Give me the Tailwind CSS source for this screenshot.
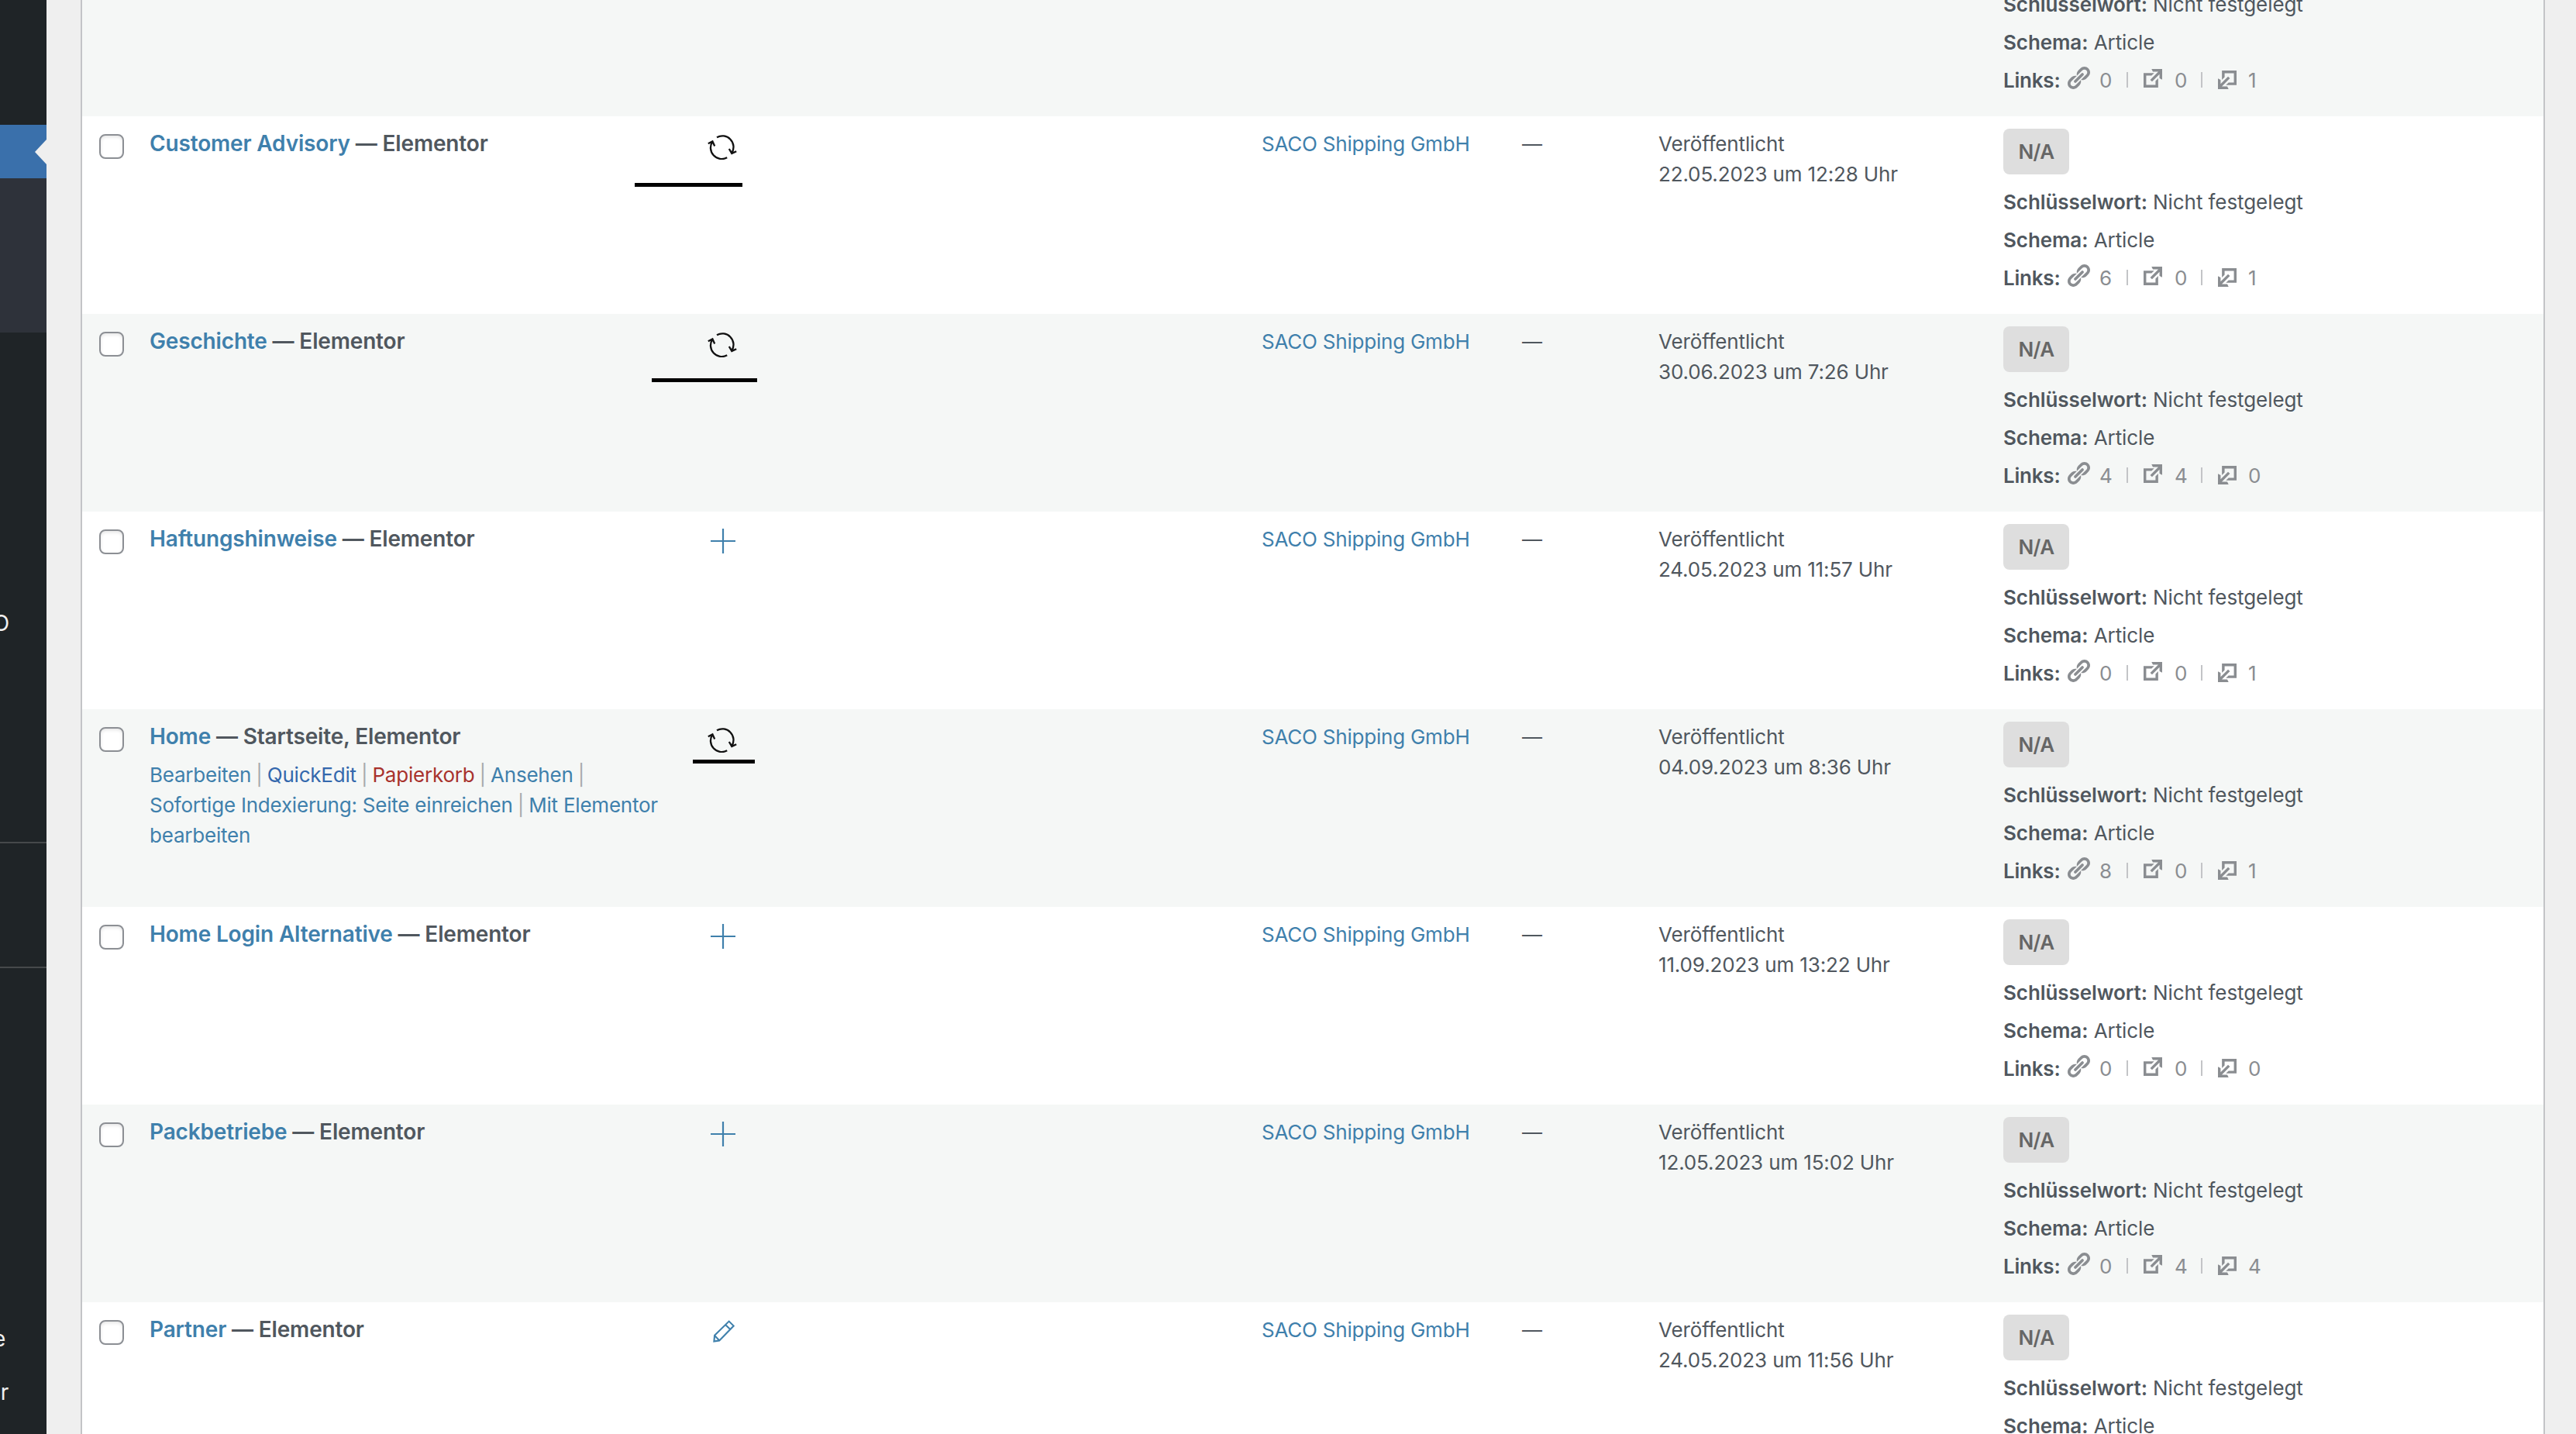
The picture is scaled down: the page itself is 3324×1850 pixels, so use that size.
<!DOCTYPE html>
<html lang="de">
<head>
  <meta charset="UTF-8" />
  <meta name="viewport" content="width=device-width, initial-scale=1.0" />
  <title>Seiten</title>
  <script src="https://cdn.jsdelivr.net/npm/@tailwindcss/browser@4"></script>
</head>
<body class="flex h-[1850px] overflow-hidden bg-[#efefef] font-['Inter',sans-serif] text-[26px] leading-[39px] tracking-[-0.22px] text-[#50575e]">

  <!-- Icons -->
  <svg class="hidden">
    <symbol id="sync" viewBox="0 0 38 32">
      <path d="M12 3.2A14.4 14.4 0 0 1 31.4 23.2M27.8 18l3.5 5.9 5.9-2.7M25.2 29.3A14.4 14.4 0 0 1 6.4 8.6M.8 11.2l5.6-2.9 2.8 6.2" fill="none" stroke="#111" stroke-width="2.3" />
    </symbol>
    <symbol id="plus" viewBox="0 0 32 32">
      <path d="M16 0v32M0 16h32" fill="none" stroke="#3f80ac" stroke-width="2.2" />
    </symbol>
    <symbol id="pencil" viewBox="0 0 28 29">
      <path d="M1.4 27.6l.7-7.9L20.7 1.6l6 6L8.2 26.4zM16 6l6.3 6.1M2.1 19.9l6 6.3" fill="none" stroke="#3f80ac" stroke-width="2.1" />
    </symbol>
    <symbol id="link" viewBox="2 1.5 17 17">
      <path fill="#8a8d91" d="M17.74 2.76c1.68 1.69 1.68 4.41 0 6.1l-1.53 1.52c-1.12 1.12-2.7 1.47-4.14 1.09l2.62-2.61.76-.77.76-.76c.84-.84.84-2.2 0-3.04-.84-.85-2.2-.85-3.04 0l-.77.76-3.38 3.38c-.37-1.44-.02-3.02 1.1-4.14l1.52-1.53c1.69-1.68 4.42-1.68 6.1 0zM8.59 13.43l5.34-5.34c.42-.42.42-1.1 0-1.52-.44-.43-1.13-.39-1.53 0l-5.33 5.34c-.42.42-.42 1.1 0 1.52.44.43 1.13.39 1.52 0zm-.76 2.29l4.14-4.15c.38 1.44.03 3.02-1.09 4.14l-1.52 1.53c-1.69 1.68-4.41 1.68-6.1 0-1.68-1.68-1.68-4.42 0-6.1l1.53-1.52c1.12-1.12 2.7-1.47 4.14-1.1l-4.14 4.15c-.85.84-.85 2.2 0 3.05.84.84 2.2.84 3.04 0z" />
    </symbol>
    <symbol id="external" viewBox="3 3 14 14">
      <path fill="#8a8d91" d="M9 3h8v8l-2-1V6.92l-5.6 5.59-1.41-1.41L14.08 5H10zm3 12v-3l2-2v7H3V6h8L9 8H5v7h7z" />
    </symbol>
  </svg>

  <!-- Sidebar -->
  <aside class="flex w-[60px] shrink-0 flex-col overflow-hidden bg-[#1f2427] text-[28px] text-[#f0f0f1]">
    <div class="h-[161px] shrink-0"></div>
    <div class="flex h-[69px] shrink-0 items-center justify-end bg-[#3a70ab]">
      <svg class="h-8 w-[15px]" viewBox="0 0 15 32"><path d="M15 0v32L0 16z" fill="#efefef" /></svg>
    </div>
    <div class="h-[199px] shrink-0 bg-[#2e323a]"></div>
    <div class="flex h-[659px] shrink-0 justify-end border-b-2 border-[#46494b] pt-[356px] pr-12">O</div>
    <div class="h-[161px] shrink-0 border-b-2 border-[#46494b]"></div>
    <div class="flex shrink-0 flex-col items-end gap-[30px] pt-[459px] pr-[53px]">
      <span>e</span>
      <span class="-mr-[4px]">r</span>
    </div>
  </aside>

  <!-- Page list -->
  <main class="ml-11 w-[3180px] shrink-0 border-x-2 border-[#c3c4c7] bg-white">
    <div id="rows" class="-mt-[105px]"></div>
  </main>

  <script>
    const pages = [
      { title: "", state: "", icon: "", date: "", links: [0, 0, 1] },
      { title: "Customer Advisory", state: "Elementor", icon: "sync", date: "22.05.2023 um 12:28 Uhr", links: [6, 0, 1], mark: "left-[713px] top-[86px] w-[139px]" },
      { title: "Geschichte", state: "Elementor", icon: "sync", date: "30.06.2023 um 7:26 Uhr", links: [4, 4, 0], mark: "left-[735px] top-[83px] w-[136px]" },
      { title: "Haftungshinweise", state: "Elementor", icon: "plus", date: "24.05.2023 um 11:57 Uhr", links: [0, 0, 1] },
      { title: "Home", state: "Startseite, Elementor", icon: "sync", date: "04.09.2023 um 8:36 Uhr", links: [8, 0, 1], mark: "left-[788px] top-[65px] w-[80px]", actions: true },
      { title: "Home Login Alternative", state: "Elementor", icon: "plus", date: "11.09.2023 um 13:22 Uhr", links: [0, 0, 0] },
      { title: "Packbetriebe", state: "Elementor", icon: "plus", date: "12.05.2023 um 15:02 Uhr", links: [0, 4, 4] },
      { title: "Partner", state: "Elementor", icon: "pencil", date: "24.05.2023 um 11:56 Uhr", links: [0, 0, 1] },
    ];

    const iconClass = {
      sync: "mt-2 ml-[1px] h-8 w-[38px]",
      plus: "mt-[6px] ml-[5px] size-8",
      pencil: "mt-[7px] ml-2 h-[29px] w-7",
    };

    const bar = `<span class="-mx-px text-[#a7aaad]">|</span>`;
    const actions = `
      <div class="mt-[10px] whitespace-nowrap text-[#3f80ac]">
        <a>Bearbeiten</a> ${bar} <a class="text-[#3468ad]">QuickEdit</a> ${bar} <a class="text-[#a8322d]">Papierkorb</a> ${bar} <a>Ansehen</a> ${bar}<br>
        <a>Sofortige Indexierung: Seite einreichen</a> ${bar} <a>Mit Elementor<br>bearbeiten</a>
      </div>`;

    document.getElementById("rows").innerHTML = pages.map((p, i) => `
      <div class="relative grid h-[255px] grid-cols-[87px_719px_716px_336px_176px_445px_1fr] pt-4 ${i % 2 ? "bg-white" : "bg-[#f5f7f6]"}">
        <div class="pt-[7px] pl-[22px]">
          <div class="size-8 rounded-lg border-2 border-[#8c8f94] bg-white shadow-[inset_0_2px_4px_rgba(0,0,0,0.1)]"></div>
        </div>
        <div>
          ${p.title ? `<div class="text-[28px] font-semibold tracking-[-0.16px]"><a class="text-[#3f80ac]">${p.title}</a> — ${p.state}</div>` : ""}
          ${p.actions ? actions : ""}
        </div>
        <div>${p.icon ? `<svg class="${iconClass[p.icon]}"><use href="#${p.icon}" /></svg>` : ""}</div>
        <div class="text-[#3f80ac]">${p.title ? "SACO Shipping GmbH" : ""}</div>
        <div>${p.title ? "—" : ""}</div>
        <div class="tracking-[-0.14px]">${p.title ? `Veröffentlicht<br>${p.date}` : ""}</div>
        <div>
          <div class="mb-[11px] h-[59px] w-[85px] rounded-lg bg-[#dedede] text-center leading-[59px] font-semibold tracking-[-0.6px] text-[#666]">${p.title ? "N/A" : ""}</div>
          <div class="leading-[49px] tracking-[-0.08px]"><b class="font-semibold">Schlüsselwort:</b> Nicht festgelegt</div>
          <div class="leading-[49px] tracking-[-0.08px]"><b class="font-semibold">Schema:</b> Article</div>
          <div class="flex items-center leading-[49px] text-[#8a8d91]">
            <b class="w-[83px] font-semibold text-[#50575e]">Links:</b>
            <svg class="mr-3 -mt-[6px] h-[29px] w-[29px]"><use href="#link" /></svg>
            <span class="w-[35px]">${p.links[0]}</span>
            <i class="mr-5 -mt-[2px] h-5 w-0.5 bg-[#c3c4c7]"></i>
            <svg class="mr-4 -mt-[6px] size-6"><use href="#external" /></svg>
            <span class="w-[34px]">${p.links[1]}</span>
            <i class="mr-5 -mt-[2px] h-5 w-0.5 bg-[#c3c4c7]"></i>
            <svg class="mr-[15px] -mt-[2px] size-6 rotate-180"><use href="#external" /></svg>
            <span>${p.links[2]}</span>
          </div>
        </div>
        ${p.mark ? `<div class="absolute h-[5px] bg-black ${p.mark}"></div>` : ""}
      </div>`).join("");
  </script>
</body>
</html>
